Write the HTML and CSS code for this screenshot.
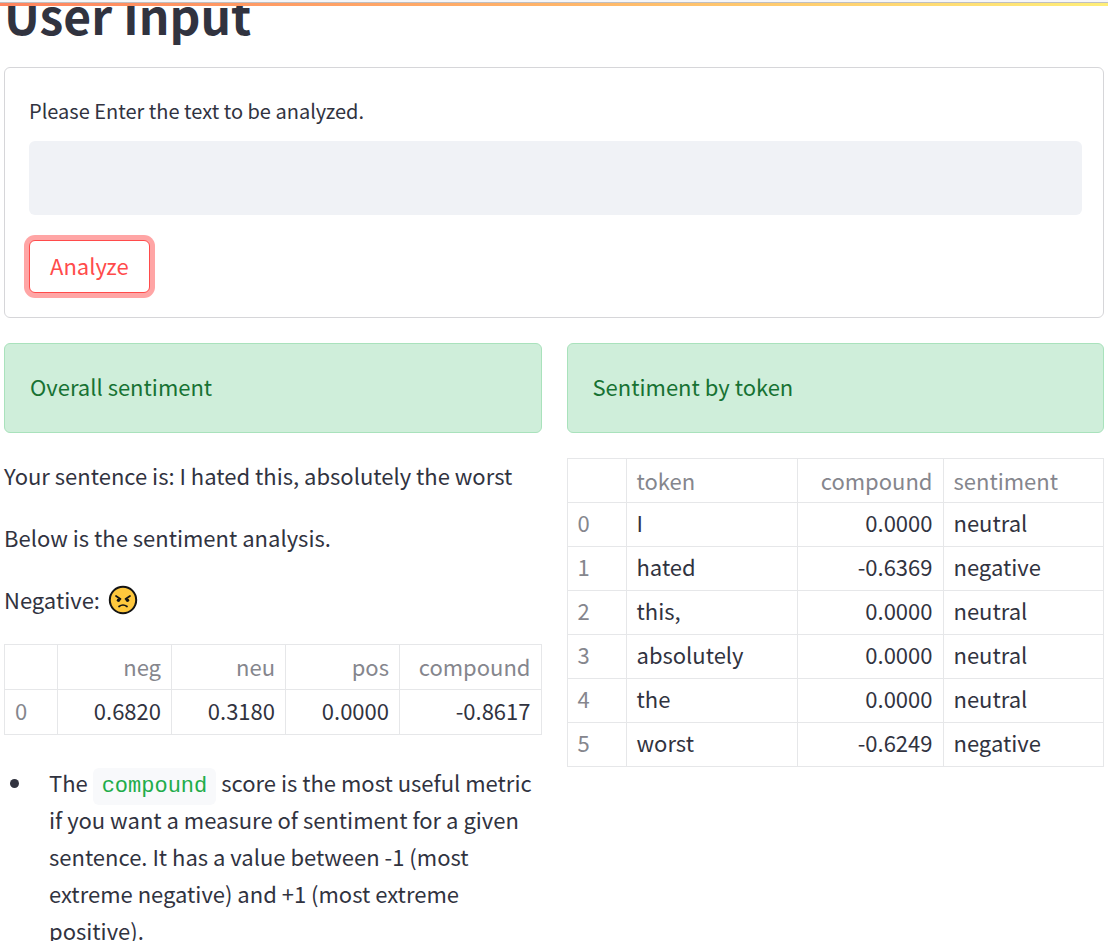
FILE: index.html
```html
<!DOCTYPE html>
<html lang="en">
<head>
<meta charset="utf-8">
<meta name="viewport" content="width=device-width, initial-scale=1">
<title>Sentiment analysis</title>
<link rel="stylesheet" href="styles.css">
</head>
<body>
<div class="topbar"></div>
<main class="page">
  <h1 class="title">User Input</h1>
  <form class="form">
    <label class="form-label" for="text">Please Enter the text to be analyzed.</label>
    <input class="form-input" id="text" type="text">
    <button class="form-button" type="button">Analyze</button>
  </form>
  <div class="columns">
    <section class="column">
      <div class="alert">Overall sentiment</div>
      <p class="text">Your sentence is: I hated this, absolutely the worst</p>
      <p class="text">Below is the sentiment analysis.</p>
      <p class="text mood">Negative:
        <svg class="emoji" viewBox="0 0 30 30" role="img" aria-label="angry face">
          <circle cx="15" cy="15" r="13.200" fill="#ffc83d" stroke="#141414" stroke-width="2"/>
          <path d="M8 11 12.500 14M22 11 17.500 14M11 21.500Q15 18.500 19 21.500" fill="none" stroke="#141414" stroke-width="1.700" stroke-linecap="round"/>
          <circle cx="10.500" cy="15.200" r="1.700" fill="#141414"/>
          <circle cx="19.500" cy="15.200" r="1.700" fill="#141414"/>
        </svg>
      </p>
      <table class="table scores">
        <colgroup><col class="c-index"><col class="c-score"><col class="c-score"><col class="c-score"><col></colgroup>
        <thead>
          <tr><th></th><th class="num">neg</th><th class="num">neu</th><th class="num">pos</th><th class="num">compound</th></tr>
        </thead>
        <tbody>
          <tr><th>0</th><td class="num">0.6820</td><td class="num">0.3180</td><td class="num">0.0000</td><td class="num">-0.8617</td></tr>
        </tbody>
      </table>
      <ul class="notes">
        <li class="note"><div>The <code class="code">compound</code> score is the most useful metric if you want a measure of sentiment for a given sentence. It has a value between -1 (most extreme negative) and +1 (most extreme positive).</div></li>
      </ul>
    </section>
    <section class="column">
      <div class="alert">Sentiment by token</div>
      <table class="table tokens">
        <colgroup><col class="c-index"><col class="c-token"><col class="c-compound"><col></colgroup>
        <thead>
          <tr><th></th><th>token</th><th class="num">compound</th><th>sentiment</th></tr>
        </thead>
        <tbody>
          <tr><th>0</th><td>I</td><td class="num">0.0000</td><td>neutral</td></tr>
          <tr><th>1</th><td>hated</td><td class="num">-0.6369</td><td>negative</td></tr>
          <tr><th>2</th><td>this,</td><td class="num">0.0000</td><td>neutral</td></tr>
          <tr><th>3</th><td>absolutely</td><td class="num">0.0000</td><td>neutral</td></tr>
          <tr><th>4</th><td>the</td><td class="num">0.0000</td><td>neutral</td></tr>
          <tr><th>5</th><td>worst</td><td class="num">-0.6249</td><td>negative</td></tr>
        </tbody>
      </table>
    </section>
  </div>
</main>
</body>
</html>
```
FILE: styles.css
```css
* { box-sizing: border-box; }
html { scrollbar-width: none; }
body {
  margin: 0;
  background: #fff;
  color: #31333f;
  font: 22px/37px "Noto Sans CJK SC", "Noto Sans", sans-serif;
}
.topbar {
  position: fixed;
  inset: 0 0 auto;
  height: 6px;
  background: linear-gradient(90deg, #ff8560, #ffb469 50%, #ffee78);
  border-top: 2px solid #f6f6f8;
  box-shadow: inset 0 1px #bfbfc2;
}
.page { padding: 0 4px; }
.title {
  margin: 0;
  padding-bottom: 39px;
  font-size: 48px;
  line-height: 28px;
  font-weight: 700;
}
.form {
  display: flex;
  flex-direction: column;
  align-items: flex-start;
  padding: 24px 21px 24px 24px;
  border: 1px solid #d6d6d9;
  border-radius: 6px;
}
.form-label { font-size: 20px; line-height: 38px; padding-bottom: 11px; }
.form-input {
  width: 100%;
  height: 74px;
  margin-bottom: 25px;
  padding: 0 20px;
  border: 0;
  border-radius: 6px;
  background: #f0f2f6;
  color: inherit;
  font: inherit;
}
.form-button {
  padding: 6px 20px 8px;
  border: 1px solid #ff4b4b;
  border-radius: 6px;
  box-shadow: 0 0 0 5px #ffa5a5;
  background: #fff;
  color: #ff4b4b;
  font: inherit;
}
.columns {
  display: grid;
  grid-template-columns: 1fr 1fr;
  gap: 25px;
  padding-top: 25px;
}
.column { display: flex; flex-direction: column; gap: 25px; min-width: 0; }
.alert {
  padding: 24px 25px 27px;
  border: 1px solid #a9e2bc;
  border-radius: 6px;
  background: #cfeeda;
  color: #177233;
}
.text { margin: 0; padding-bottom: 2px; line-height: 35px; }
.mood { display: flex; align-items: center; gap: 8px; }
.emoji { width: 30px; height: 30px; }
.table {
  width: 100%;
  table-layout: fixed;
  border-collapse: collapse;
  border: 1px solid #e6e7e9;
}
.table th, .table td {
  height: 44px;
  padding: 0 10px 2px;
  border: 1px solid #e6e7e9;
  line-height: 38px;
  text-align: left;
  font-weight: 400;
}
.table tbody th, .table tbody td { padding-bottom: 5px; }
.table th { color: #85868d; }
.table .num { text-align: right; }
.scores th, .scores td { height: 45px; }
.scores .c-index { width: 53px; }
.scores .c-score { width: 114px; }
.tokens .c-index { width: 59px; }
.tokens .c-token { width: 171px; }
.tokens .c-compound { width: 146px; }
.notes { margin: 0; padding: 4px 0 0; list-style: none; }
.note { display: grid; grid-template-columns: 39px 1fr; padding-left: 6px; }
.note::before {
  content: "";
  width: 9px;
  height: 9px;
  margin-top: 15px;
  border-radius: 50%;
  background: #31333f;
}
.code {
  padding: 6px 9px;
  border-radius: 6px;
  background: #f8f9fb;
  color: #21ac4a;
  font: 22px/24px "Liberation Mono", monospace;
}
```
